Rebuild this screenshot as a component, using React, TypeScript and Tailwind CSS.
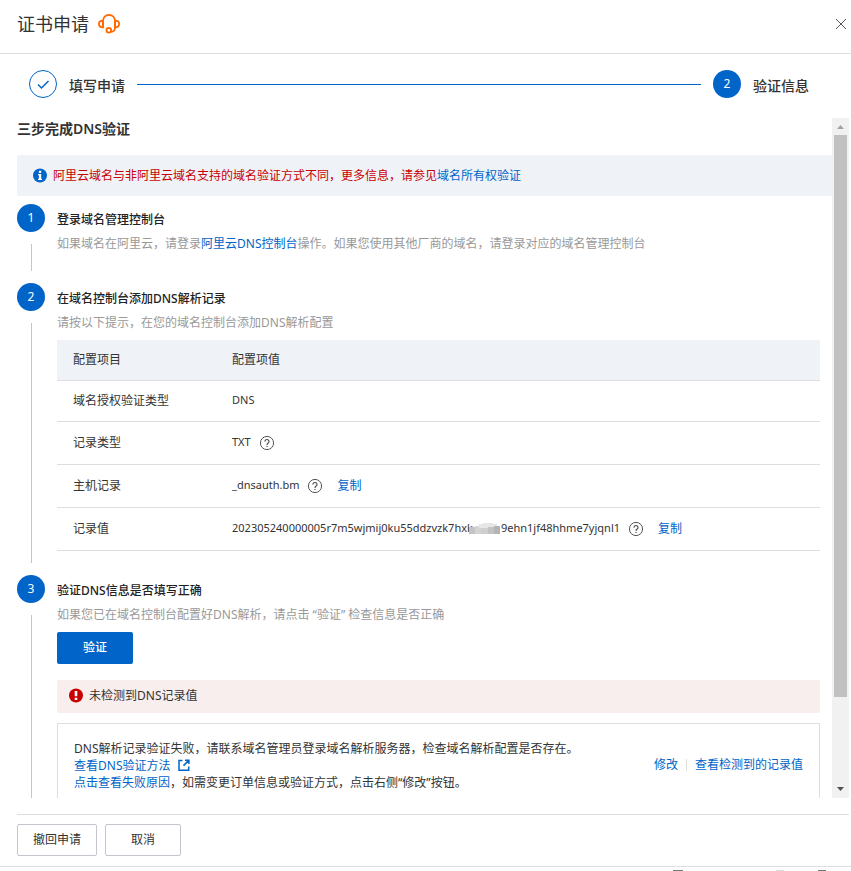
import type { ReactNode } from 'react';
import clsx from 'clsx';

type StepProps = {
  index: number;
  title: string;
  desc: ReactNode;
  className?: string;
  children?: ReactNode;
};

function HeadsetIcon() {
  return (
    <svg className="size-6" viewBox="0 0 24 24" fill="none" stroke="#ff6a00" strokeWidth="1.8">
      <path d="M6 15.600V9.300C6 5.500 8.500 3 12 3s6 2.500 6 6.300v6.300c0 2.500-1.500 4.200-3.900 4.300" />
      <path d="M6 8.700C3.200 8.700 1.900 9.800 1.900 12S3.200 15.300 6 15.300Z" />
      <path d="M18 8.700c2.800 0 4.100 1.100 4.100 3.300s-1.300 3.300-4.100 3.300Z" />
      <circle cx="11.800" cy="18.300" r="2.300" />
    </svg>
  );
}

function CloseIcon() {
  return (
    <svg className="size-3" viewBox="0 0 12 12" fill="none" stroke="#555" strokeWidth="1">
      <path d="M1 1l10 10M11 1L1 11" />
    </svg>
  );
}

function HelpIcon() {
  return (
    <svg className="size-4" viewBox="0 0 16 16" fill="none" stroke="#555">
      <circle cx="8" cy="8" r="6.600" strokeWidth="1" />
      <path d="M6 6.600a2 2 0 1 1 3.200 1.500C8.400 8.700 8 9 8 9.900" strokeWidth="1.200" />
      <path d="M8 10.900v1.200" strokeWidth="1.300" />
    </svg>
  );
}

function InfoIcon() {
  return (
    <svg className="size-4 shrink-0" viewBox="0 0 16 16">
      <circle cx="8" cy="7.500" r="7" fill="#0064c8" />
      <path d="M6.900 2.800h2.300v2.200H6.900zM6 6h3.200v4.700H10V12H6v-1.300h.9V7.300H6z" fill="#fff" />
    </svg>
  );
}

function ErrorIcon() {
  return (
    <svg className="size-4 shrink-0" viewBox="0 0 16 16">
      <circle cx="8" cy="7.500" r="7" fill="#c80000" />
      <path d="M6.700 3h2.600v5.300H6.700zM6.700 9.700h2.600V12H6.700z" fill="#fff" />
    </svg>
  );
}

function ExternalIcon() {
  return (
    <svg className="size-3" viewBox="0 0 12 12" fill="none" stroke="#0064c8" strokeWidth="1.500">
      <path d="M4.500 1.500H1v9.700h9.700V7.500M7 1.200h3.900v3.900M10.700 1.400L5.500 6.600" />
    </svg>
  );
}

function TextLink({ children }: { children: ReactNode }) {
  return (
    <a href="#" className="text-[#0064c8]">
      {children}
    </a>
  );
}

function Bullet({ children }: { children: ReactNode }) {
  return (
    <span className="flex size-7 shrink-0 items-center justify-center rounded-full bg-[#0064c8] text-xs font-normal text-white">
      {children}
    </span>
  );
}

function Step({ index, title, desc, className, children }: StepProps) {
  return (
    <li className={clsx('flex gap-3', className)}>
      <div className="flex flex-col items-center gap-3">
        <Bullet>{index}</Bullet>
        <span className="w-px flex-1 bg-[#c0c6cc]" />
      </div>
      <div className="min-w-0 flex-1 pt-1">
        <h3 className="text-xs leading-6 font-medium text-[#222]">{title}</h3>
        <p className="text-xs leading-6 text-[#999]">{desc}</p>
        {children}
      </div>
    </li>
  );
}

function HelpButton() {
  return (
    <button type="button" aria-label="帮助" className="ml-2">
      <HelpIcon />
    </button>
  );
}

function CopyButton() {
  return (
    <button type="button" className="ml-3.5 text-xs text-[#0064c8]">
      复制
    </button>
  );
}

// hides the middle of the record value
function MaskedBlock() {
  return (
    <svg className="-ml-1 h-3 w-8" viewBox="0 0 32 12" preserveAspectRatio="none">
      <path d="M0 4h6v7H0z" fill="#c4c4c4" />
      <path d="M6 3h6v8H6z" fill="#d4d4d4" />
      <path d="M10 1h4V0h10v1h4v4H10z" fill="#e6e6e6" />
      <path d="M12 5h7v6h-7z" fill="#cfcfcf" />
      <path d="M19 4h6v7h-6z" fill="#c2c2c2" />
      <path d="M25 3h6v8h-6z" fill="#b4b4b4" />
    </svg>
  );
}

function RecordTable() {
  return (
    <table className="mt-[5px] w-full text-left text-xs text-[#333]">
      <thead>
        <tr className="h-10 border-b border-[#dedede] bg-[#eff3f8]">
          <th className="w-[159px] pl-4 font-normal">配置项目</th>
          <th className="pl-4 font-normal">配置项值</th>
        </tr>
      </thead>
      <tbody>
        <tr className="h-[41px] border-b border-[#dedede]">
          <td className="pl-4">域名授权验证类型</td>
          <td className="pl-4 text-[11px]">DNS</td>
        </tr>
        <tr className="h-[43px] border-b border-[#dedede]">
          <td className="pl-4">记录类型</td>
          <td className="pl-4 text-[11px]">
            <div className="flex items-center">
              TXT
              <HelpButton />
            </div>
          </td>
        </tr>
        <tr className="h-[43px] border-b border-[#dedede]">
          <td className="pl-4">主机记录</td>
          <td className="pl-4 text-[11px]">
            <div className="flex items-center">
              _dnsauth.bm
              <HelpButton />
              <CopyButton />
            </div>
          </td>
        </tr>
        <tr className="h-[43px] border-b border-[#dedede]">
          <td className="pl-4">记录值</td>
          <td className="pl-4 text-[11px]">
            <div className="flex items-center">
              202305240000005r7m5wjmij0ku55ddzvzk7hxk
              <MaskedBlock />
              9ehn1jf48hhme7yjqnl1
              <HelpButton />
              <CopyButton />
            </div>
          </td>
        </tr>
      </tbody>
    </table>
  );
}

function Scrollbar() {
  return (
    <div className="flex w-[17px] shrink-0 flex-col items-center bg-[#f1f1f1]">
      <svg className="size-[17px] shrink-0" viewBox="0 0 17 17">
        <path d="M8.500 7L12 11H5z" fill="#a3a3a3" />
      </svg>
      <div className="w-[13px] flex-[562] bg-[#c1c1c1]" />
      <div className="flex-[84]" />
      <svg className="size-[17px] shrink-0" viewBox="0 0 17 17">
        <path d="M5 6h7l-3.500 4z" fill="#505050" />
      </svg>
    </div>
  );
}

export default function App() {
  return (
    <div className="flex h-screen flex-col overflow-hidden bg-white font-['Noto_Sans','Noto_Sans_CJK_SC',sans-serif] text-[#333]">
      <header className="flex h-[54px] shrink-0 items-center border-b border-[#dedede] pr-1 pb-1.5 pl-[17px]">
        <h1 className="text-lg text-[#333]">证书申请</h1>
        <button type="button" aria-label="客服" className="ml-2">
          <HeadsetIcon />
        </button>
        <button type="button" aria-label="关闭" className="ml-auto">
          <CloseIcon />
        </button>
      </header>

      <div className="mt-4 flex shrink-0 items-center gap-3 pr-[42px] pl-[29px] text-sm font-medium">
        <span className="flex size-7 items-center justify-center rounded-full border border-[#0064c8]">
          <svg className="size-3.5" viewBox="0 0 14 14" fill="none" stroke="#0064c8" strokeWidth="1.500">
            <path d="M2 7.500l3.500 3.500L12.500 4" />
          </svg>
        </span>
        <span className="pt-1">填写申请</span>
        <span className="h-px flex-1 bg-[#0064c8]" />
        <Bullet>2</Bullet>
        <span className="pt-1">验证信息</span>
      </div>

      <div className="mt-5 mr-0.5 flex min-h-0 flex-1">
        <main className="min-w-0 flex-1 overflow-hidden pl-[17px]">
          <h2 className="text-sm leading-[22px] font-semibold">三步完成DNS验证</h2>
          <div className="mt-[15px] flex h-[41px] items-center gap-[5px] rounded-xs bg-[#eff3f8] px-[15px] text-xs text-[#c80000]">
            <InfoIcon />
            <p>
              阿里云域名与非阿里云域名支持的域名验证方式不同，更多信息，请参见<TextLink>域名所有权验证</TextLink>
            </p>
          </div>

          <ol className="mt-2 pr-3">
            <Step
              index={1}
              title="登录域名管理控制台"
              className="mb-3 h-[67px]"
              desc={
                <>
                  如果域名在阿里云，请登录<TextLink>阿里云DNS控制台</TextLink>
                  操作。如果您使用其他厂商的域名，请登录对应的域名管理控制台
                </>
              }
            />
            <Step
              index={2}
              title="在域名控制台添加DNS解析记录"
              className="mb-3"
              desc="请按以下提示，在您的域名控制台添加DNS解析配置"
            >
              <div className="pb-3">
                <RecordTable />
              </div>
            </Step>
            <Step
              index={3}
              title="验证DNS信息是否填写正确"
              desc="如果您已在域名控制台配置好DNS解析，请点击 “验证” 检查信息是否正确"
            >
              <button type="button" className="mt-[5px] h-8 w-[76px] rounded-xs bg-[#0064c8] text-xs font-medium text-white">
                验证
              </button>
              <div role="alert" className="mt-4 flex h-[33px] items-center gap-[5px] rounded-xs bg-[#f9eeee] px-[11px] text-xs">
                <ErrorIcon />
                未检测到DNS记录值
              </div>
              <div className="mt-2.5 flex items-center justify-between border border-[#dedede] p-4 text-xs">
                <div className="leading-[17px]">
                  <p>DNS解析记录验证失败，请联系域名管理员登录域名解析服务器，检查域名解析配置是否存在。</p>
                  <a href="#" className="flex items-center gap-2 text-[#0064c8]">
                    查看DNS验证方法
                    <ExternalIcon />
                  </a>
                  <p>
                    <TextLink>点击查看失败原因</TextLink>，如需变更订单信息或验证方式，点击右侧“修改”按钮。
                  </p>
                </div>
                <div className="flex shrink-0 items-center gap-2 text-[#0064c8]">
                  <button type="button">修改</button>
                  <span className="h-3 w-px bg-[#dedede]" />
                  <button type="button">查看检测到的记录值</button>
                </div>
              </div>
            </Step>
          </ol>
        </main>
        <Scrollbar />
      </div>

      <footer className="mt-4 shrink-0 border-b border-[#dedede] pr-0.5 pl-[17px]">
        <div className="flex gap-2 border-t border-[#dedede] pt-[9px] pb-2.5 text-xs">
          <button type="button" className="h-8 w-20 rounded-xs border border-[#c0c6cc]">
            撤回申请
          </button>
          <button type="button" className="h-8 w-[76px] rounded-xs border border-[#c0c6cc]">
            取消
          </button>
        </div>
      </footer>
      {/* top edge of whatever sits under the panel */}
      <div className="flex h-1 shrink-0 items-end justify-end pr-[25px]">
        <span className="mr-[93px] h-px w-2.5 bg-[#777]" />
        <span className="mr-[34px] h-px w-2 bg-[#ddd]" />
        <span className="h-px w-2 bg-[#777]" />
      </div>
    </div>
  );
}
